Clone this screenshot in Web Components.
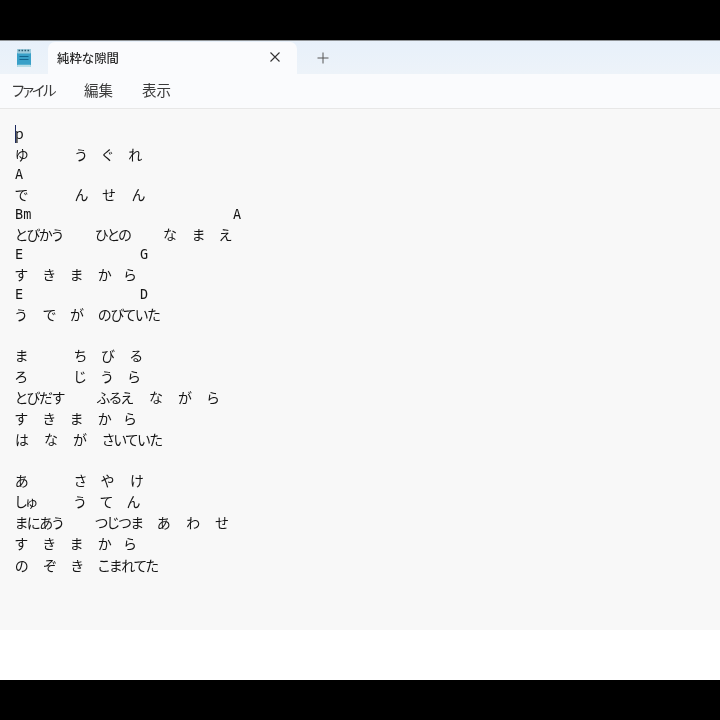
<!DOCTYPE html>
<html lang="ja"><head><meta charset="utf-8">
<style>
html,body{margin:0;padding:0;background:#000}
</style></head><body>
<np-window></np-window>
<template id="win"><style>
:host{display:flex;flex-direction:column;width:720px;height:720px;background:#000;font-family:"Noto Sans CJK JP","Noto Sans",sans-serif;color:#222;overflow:hidden;filter:blur(.35px)}
.pad{height:40px;flex:none;background:#000}
.tabs{height:34px;flex:none;background:linear-gradient(#e7f0fa,#edf3f9);display:flex;align-items:flex-end;box-shadow:inset 0 1px 0 #8f9396}
.ico{width:48px;height:34px;display:flex;align-items:center;justify-content:center;box-sizing:border-box}
.tab{width:249px;height:32px;background:#fafbfd;border-radius:7px 7px 0 0;display:flex;align-items:center;box-sizing:border-box;padding:0 15px 1px 9px;font-size:12.4px;font-weight:500;color:#2b2b2b}
.tab span{flex:1}
.plus{width:52px;height:34px;display:flex;align-items:center;justify-content:center;box-sizing:border-box;padding-top:2px}
.menu{height:32px;flex:none;background:#fafbfd;border-bottom:1px solid #e7e7e7;display:flex;align-items:center;padding:0 0 3px 12px;gap:29px;font-size:14.5px;color:#3a3a3a;box-sizing:border-box;height:35px;white-space:nowrap}
.menu span:first-child{font-feature-settings:"palt";letter-spacing:-1.9px;width:43px}
.ed{height:521px;flex:none;background:#f8f8f8;padding:13px 0 0 15px;box-sizing:border-box;position:relative}
.caret{position:absolute;left:15px;top:16px;width:1px;height:18px;background:#1c2a5e}
.white{height:50px;flex:none;background:#fff}
.bot{flex:1;background:#000}
</style>
<div class="pad"></div>
<div class="tabs">
<div class="ico"><svg width="14" height="19" viewBox="0 0 14 19"><rect x="0" y="1" width="14" height="18" rx="1.5" fill="#39a0c8"/><rect x="0" y="1" width="14" height="4.5" rx="1" fill="#9ccbdc"/><path d="M1.5 2.5h1.6M4.5 2.5h1.6M7.5 2.5h1.6M10.5 2.5h1.6" stroke="#2a5a70" stroke-width="1.6"/><path d="M2.5 8.5h9M2.5 11.5h9" stroke="#12648c" stroke-width="1"/><rect x="0" y="16.8" width="14" height="2.2" rx="1" fill="#b9dde6"/></svg></div>
<div class="tab"><span>純粋な隙間</span><svg width="12" height="12" viewBox="0 0 12 12" style="margin:-1px 1px 0 0"><path d="M1.5 1.5l9 9M10.5 1.5l-9 9" stroke="#333" stroke-width="1.1" fill="none"/></svg></div>
<div class="plus"><svg width="12" height="12" viewBox="0 0 12 12"><path d="M6 .5v11M.5 6h11" stroke="#555" stroke-width="1" fill="none"/></svg></div>
</div>
<div class="menu"><span>ファイル</span><span>編集</span><span>表示</span></div>
<div class="ed"><div class="caret"></div><slot></slot></div>
<div class="white"></div>
<div class="bot"></div>
</template>
<template id="ln"><style>
:host{display:flex;height:var(--h,21px);align-items:center;white-space:pre;font-size:14px;letter-spacing:var(--ls,-.95px);font-feature-settings:"palt";color:#151515}
::slotted(span){display:inline-block;flex:none}
</style><slot></slot></template>
<script>
class NpWindow extends HTMLElement{constructor(){super();this.attachShadow({mode:"open"}).append(document.getElementById("win").content.cloneNode(true));}
connectedCallback(){
const R=[
["K",[15,"p"]],
["K",[15,"ゆ"],[75,"う"],[102,"ぐ"],[128,"れ"]],
["L",[15,"A"]],
["K",[15,"で"],[75,"ん"],[102,"せ"],[132,"ん"]],
["L",[15,"Bm"],[233,"A"]],
["K",[15,"とびかう"],[95,"ひとの"],[163,"な"],[192,"ま"],[219,"え"]],
["L",[15,"E"],[140,"G"]],
["K",[15,"す"],[43,"き"],[70,"ま"],[98,"か"],[124,"ら"]],
["L",[15,"E"],[140,"D"]],
["K",[15,"う"],[43,"で"],[70,"が"],[98,"のびていた"]],
["B"],
["K",[15,"ま"],[74,"ち"],[101,"び"],[130,"る"]],
["K",[15,"ろ"],[74,"じ"],[101,"う"],[128,"ら"]],
["K",[15,"とびだす"],[97,"ふるえ"],[149,"な"],[178,"が"],[207,"ら"]],
["K",[15,"す"],[43,"き"],[70,"ま"],[98,"か"],[124,"ら"]],
["K",[15,"は"],[44,"な"],[73,"が"],[102,"さいていた"]],
["B"],
["M",[15,"あ"],[74,"さ"],[101,"や"],[130,"け"]],
["M",[15,"しゅ"],[74,"う"],[100,"て"],[127,"ん"]],
["M",[15,"まにあう"],[95,"つじつま"],[157,"あ"],[186,"わ"],[215,"せ"]],
["M",[15,"す"],[43,"き"],[70,"ま"],[98,"か"],[124,"ら"]],
["M",[15,"の"],[43,"ぞ"],[71,"き"],[98,"こまれてた"]]
];
for(const [k,...s] of R){const l=document.createElement("t-line");
if(k==="L"){l.style.setProperty("--h","19px");l.style.setProperty("--ls","0");l.style.fontFamily='"DejaVu Sans Mono",monospace';l.style.fontSize="13.5px"}
if(k==="K"){l.style.setProperty("--h","21px")}
if(k==="M"){l.style.setProperty("--h","21.25px")}
if(k==="B"){l.style.setProperty("--h","20px")}
s.forEach((c,i)=>{const e=document.createElement("span");e.textContent=c[1];if(s[i+1])e.style.width=(s[i+1][0]-c[0])+"px";l.append(e)});
this.append(l)}
}}
class TLine extends HTMLElement{constructor(){super();this.attachShadow({mode:"open"}).append(document.getElementById("ln").content.cloneNode(true));}}
customElements.define("t-line",TLine);
customElements.define("np-window",NpWindow);
</script>
</body></html>
